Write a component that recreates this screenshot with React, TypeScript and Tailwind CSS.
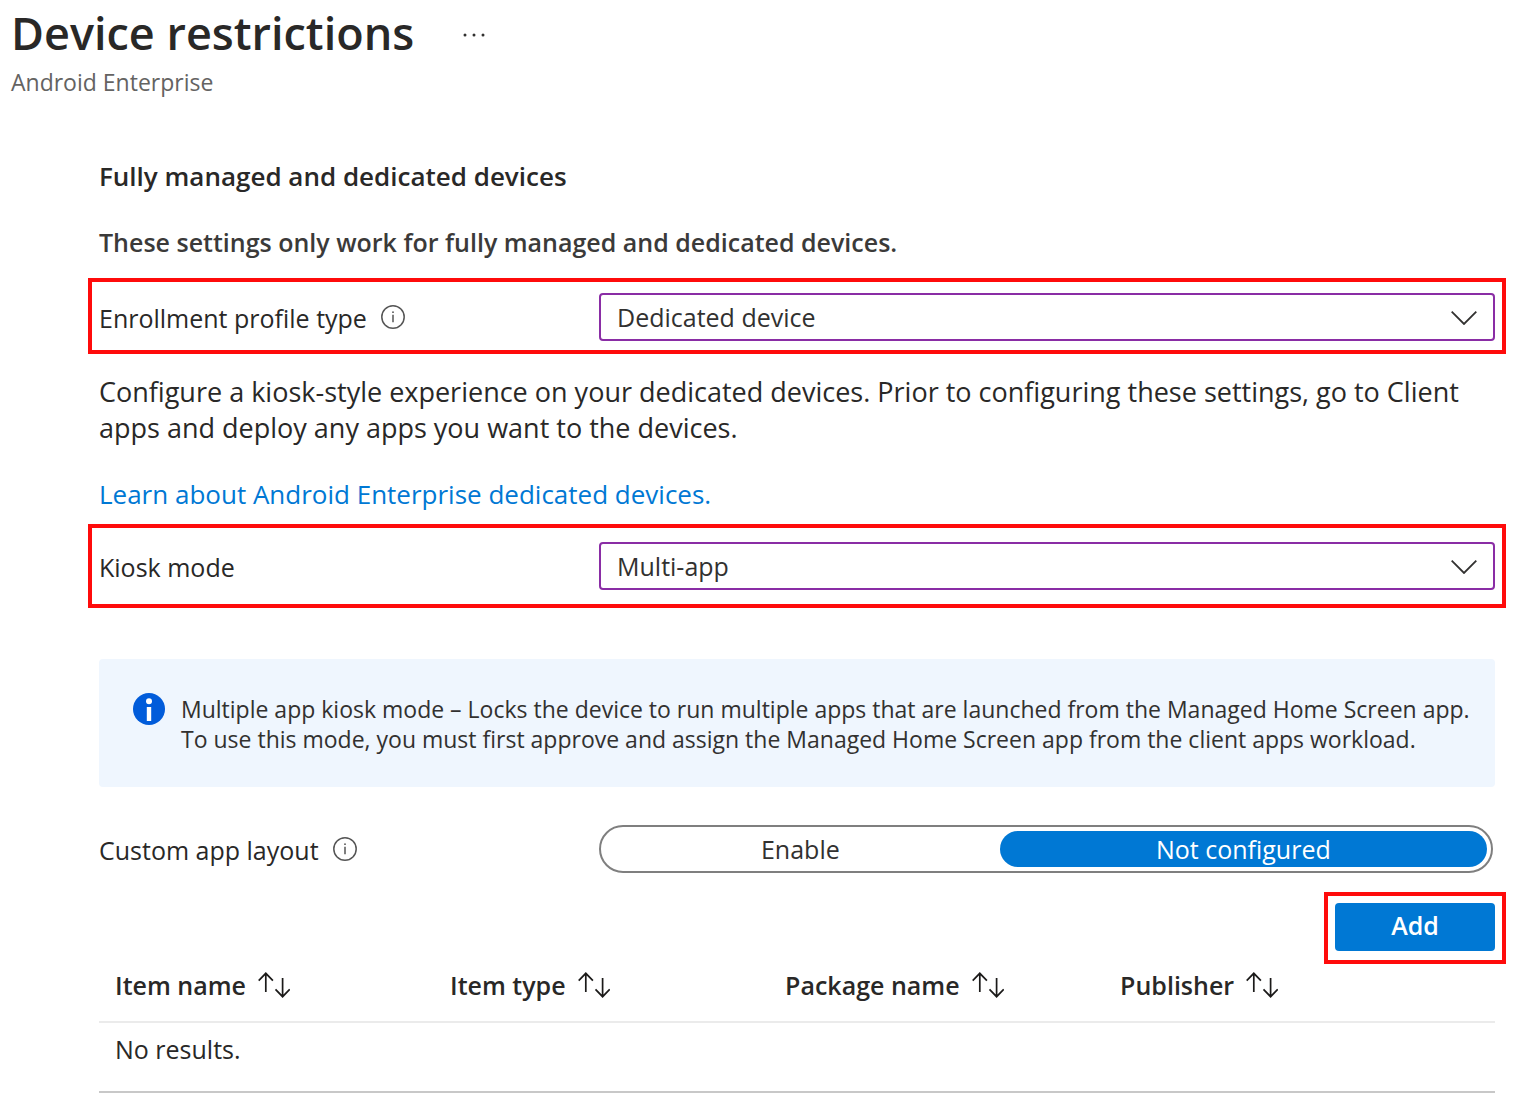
import { useState, type ReactNode } from "react";

const columns = ["Item name", "Item type", "Package name", "Publisher"];

const layoutOptions = ["Enable", "Not configured"];

function InfoIcon() {
  return (
    <svg viewBox="0 0 24 24" className="size-6 shrink-0 text-[#555555]" fill="none" stroke="currentColor" aria-hidden="true">
      <circle cx="12" cy="12" r="11.2" strokeWidth="1.5" />
      <path d="M12 9.8v7.4" strokeWidth="1.5" />
      <circle cx="12" cy="7.2" r="0.9" fill="currentColor" stroke="none" />
    </svg>
  );
}

function ChevronIcon() {
  return (
    <svg viewBox="0 0 26 14" className="pointer-events-none absolute top-[18px] right-[18px] h-[14px] w-[26px]" fill="none" stroke="#323130" strokeWidth="1.8" aria-hidden="true">
      <path d="M0.7 0.7 13 13 25.3 0.7" />
    </svg>
  );
}

function SortIcon() {
  return (
    <svg viewBox="0 0 32 26" className="h-[26px] w-8" fill="none" stroke="#1b1a19" strokeWidth="1.7" aria-hidden="true">
      <path d="M7.8 20V1.3M0.7 8.7 7.8 1.3l7.1 7.4" />
      <path d="M24.6 6v18.7M17.5 17.3l7.1 7.4 7.1-7.4" />
    </svg>
  );
}

interface SelectFieldProps {
  id: string;
  label: string;
  options: string[];
  info?: boolean;
}

function SelectField({ id, label, options, info }: SelectFieldProps) {
  return (
    <div className="flex items-center">
      <div className="flex w-[500px] shrink-0 items-center gap-[14px]">
        <label htmlFor={id} className="pt-0.5">{label}</label>
        {info && <InfoIcon />}
      </div>
      <div className="relative flex-1">
        <select
          id={id}
          className="block h-12 w-full appearance-none rounded-sm border-2 border-[#8a2da5] bg-white px-4 text-[#323130]"
        >
          {options.map((option) => (
            <option key={option}>{option}</option>
          ))}
        </select>
        <ChevronIcon />
      </div>
    </div>
  );
}

function Highlight({ className, children }: { className: string; children: ReactNode }) {
  return <div className={`border-4 border-[#ff0b0b] ${className}`}>{children}</div>;
}

export default function App() {
  const [layout, setLayout] = useState("Not configured");

  return (
    <div className="bg-white pb-5 font-['Open_Sans',sans-serif] text-[25px] leading-9 text-[#292827]">
      {/* Page header */}
      <header className="px-[11px] pt-[7px]">
        <div className="flex items-center gap-12">
          <h1 className="text-[45px] leading-[52px] font-semibold">Device restrictions</h1>
          <button type="button" aria-label="More actions" className="pt-1">
            <svg viewBox="0 0 24 4" className="h-1 w-6" fill="#323130" aria-hidden="true">
              <circle cx="3" cy="2" r="1.5" />
              <circle cx="12" cy="2" r="1.5" />
              <circle cx="21" cy="2" r="1.5" />
            </svg>
          </button>
        </div>
        <p className="mt-[5px] text-[23px] text-[#646362]">Android Enterprise</p>
      </header>

      <main className="mt-[58px] pr-2 pl-[88px]">
        <div className="px-[11px]">
          <h2 className="text-[26px] leading-9 font-semibold">Fully managed and dedicated devices</h2>
          <p className="mt-[30px] font-semibold text-[#3b3a39]">
            These settings only work for fully managed and dedicated devices.
          </p>
        </div>

        <Highlight className="mt-[18px] px-[7px] pt-[11px] pb-[9px]">
          <SelectField
            id="profile-type"
            label="Enrollment profile type"
            options={["Dedicated device", "Fully managed"]}
            info
          />
        </Highlight>

        <div className="mt-5 px-[11px]">
          <p className="text-[27px] leading-9">
            Configure a kiosk-style experience on your dedicated devices. Prior to configuring these
            settings, go to Client apps and deploy any apps you want to the devices.
          </p>
          <a href="#learn" className="mt-[30px] block w-fit text-[26px] leading-9 text-[#0078d4]">
            Learn about Android Enterprise dedicated devices.
          </a>
        </div>

        <Highlight className="mt-3 px-[7px] py-[14px]">
          <SelectField id="kiosk-mode" label="Kiosk mode" options={["Multi-app", "Single app", "Not configured"]} />
        </Highlight>

        <div className="mt-[51px] px-[11px]">
          <div className="flex gap-4 rounded-sm bg-[#eff6fe] pt-[34px] pr-6 pb-[33px] pl-[34px] text-[23px] leading-[30px] text-[#323130]">
            <svg viewBox="0 0 32 32" className="size-8 shrink-0" aria-hidden="true">
              <circle cx="16" cy="16" r="16" fill="#015cda" />
              <circle cx="16" cy="8.3" r="3" fill="#fff" />
              <path d="M13.8 14h4.4v14h-4.4z" fill="#fff" />
            </svg>
            <p className="pt-px">
              Multiple app kiosk mode – Locks the device to run multiple apps that are launched from the
              Managed Home Screen app. To use this mode, you must first approve and assign the Managed
              Home Screen app from the client apps workload.
            </p>
          </div>

          {/* Custom app layout toggle */}
          <div role="radiogroup" aria-labelledby="layout-label" className="mt-[38px] flex items-center">
            <div className="flex w-[500px] shrink-0 items-center gap-[14px]">
              <span id="layout-label" className="pt-0.5">Custom app layout</span>
              <InfoIcon />
            </div>
            <div className="mr-0.5 flex h-12 flex-1 rounded-full border-2 border-[#7f7f7f] py-1 pr-1">
              {layoutOptions.map((option) => (
                <label
                  key={option}
                  className="flex cursor-pointer items-center justify-center rounded-full text-[#323130] first:flex-9 last:flex-11 has-checked:bg-[#0078d4] has-checked:text-white"
                >
                  <input
                    type="radio"
                    name="layout"
                    className="sr-only"
                    checked={layout === option}
                    onChange={() => setLayout(option)}
                  />
                  {option}
                </label>
              ))}
            </div>
          </div>
        </div>

        <div className="mt-[19px] flex justify-end">
          <Highlight className="px-[7px] pt-[7px] pb-[9px]">
            <button type="button" className="block h-12 w-40 rounded-sm bg-[#0078d4] pb-1 font-semibold text-white">
              Add
            </button>
          </Highlight>
        </div>

        {/* Apps table */}
        <div className="px-[11px]">
          <table className="w-full table-fixed text-left">
            <thead>
              <tr className="border-b-2 border-[#ebebeb]">
                {columns.map((column) => (
                  <th key={column} className="w-[24%] pt-[3px] pb-[18px] pl-4 font-semibold last:w-[28%]">
                    <button type="button" className="flex items-center gap-3">
                      {column}
                      <SortIcon />
                    </button>
                  </th>
                ))}
              </tr>
            </thead>
            <tbody>
              <tr className="border-b-2 border-[#c8c8c8]">
                <td colSpan={4} className="pt-2 pb-6 pl-4">
                  No results.
                </td>
              </tr>
            </tbody>
          </table>
        </div>
      </main>
    </div>
  );
}
